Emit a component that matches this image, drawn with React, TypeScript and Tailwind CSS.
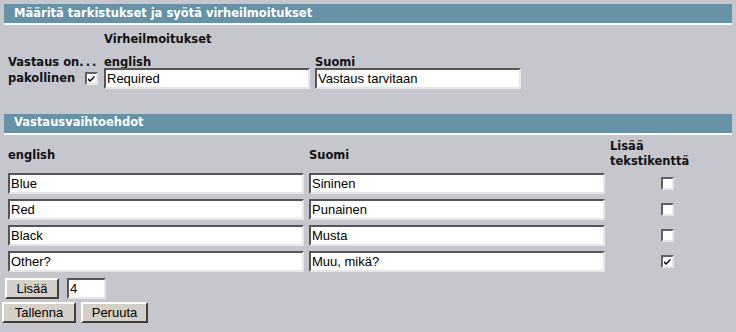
const label = 'font-["DejaVu_Sans",Verdana,sans-serif] text-[11.5px] font-bold text-[#111] leading-none';
const field =
  'h-[21px] bg-white border-2 border-t-[#555] border-l-[#555] border-r-[#e6e6e6] border-b-[#e6e6e6] px-[1px] font-["Liberation_Sans",Arial,sans-serif] text-[13px] text-black outline-none';
const button =
  'h-[21px] bg-[#d4d0c8] border-2 border-t-white border-l-white border-r-[#404040] border-b-[#404040] font-["Liberation_Sans",Arial,sans-serif] text-[13px] text-black leading-none';

const Check = ({ checked }: { checked: boolean }) => (
  <span className="inline-flex w-[13px] h-[13px] bg-white border-2 border-t-[#606060] border-l-[#606060] border-r-[#e6e6e6] border-b-[#e6e6e6] items-center justify-center">
    {checked && (
      <svg width="9" height="9" viewBox="0 0 9 9">
        <path d="M1 4 L3 6 L7.5 1.5 L7.5 3.5 L3 8 L1 6 Z" fill="#000" />
      </svg>
    )}
  </span>
);

const SectionBar = ({ title }: { title: string }) => (
  <div className="mx-[4px] border-b-2 border-white">
    <div className="h-[19px] bg-[#6593a5] flex items-center pl-[10px] font-['DejaVu_Sans',Verdana,sans-serif] text-[11.5px] font-bold text-white">
      {title}
    </div>
  </div>
);

const answers = [
  { en: 'Blue', fi: 'Sininen', text: false },
  { en: 'Red', fi: 'Punainen', text: false },
  { en: 'Black', fi: 'Musta', text: false },
  { en: 'Other?', fi: 'Muu, mikä?', text: true },
];

export default function App() {
  return (
    <div className="w-[736px] h-[332px] bg-[#c6c6ce] pt-[4px] overflow-hidden">
      <SectionBar title="Määritä tarkistukset ja syötä virheilmoitukset" />

      {/* tarkistukset */}
      <div className="grid grid-cols-[96px_211px_206px] pl-[8px] mt-[9px]">
        <div />
        <div className={`${label} h-[12px]`}>Virheilmoitukset</div>
        <div />
        <div className={`${label} mt-[11px]`}>
          Vastaus on<span className="tracking-[2px]">...</span>
        </div>
        <div className={`${label} mt-[11px]`}>english</div>
        <div className={`${label} mt-[11px]`}>Suomi</div>
        <div className="flex items-center h-[21px] mt-[-1px]">
          <span className={`${label} mt-[2px]`}>pakollinen</span>
          <span className="ml-[10px] mt-[1px] flex">
            <Check checked />
          </span>
        </div>
        <input className={`${field} w-[206px] mt-[-1px]`} defaultValue="Required" />
        <input className={`${field} w-[206px] mt-[-1px]`} defaultValue="Vastaus tarvitaan" />
      </div>

      <div className="mt-[25px]">
        <SectionBar title="Vastausvaihtoehdot" />
      </div>

      {/* vastausvaihtoehdot */}
      <div className="grid grid-cols-[301px_301px_auto] pl-[8px] mt-[6px] items-center">
        <div className={label}>english</div>
        <div className={label}>Suomi</div>
        <div className="flex flex-col">
          <div className={`${label} h-[15px] leading-[15px]`}>Lisää</div>
          <div className={`${label} h-[15px] leading-[15px]`}>tekstikenttä</div>
        </div>
      </div>
      <div className="flex flex-col gap-[5px] pl-[8px] mt-[2px]">
        {answers.map((a) => (
          <div key={a.en} className="flex items-center">
            <input className={`${field} w-[296px]`} defaultValue={a.en} />
            <input className={`${field} w-[296px] ml-[5px]`} defaultValue={a.fi} />
            <span className="ml-[56px] flex">
              <Check checked={a.text} />
            </span>
          </div>
        ))}
      </div>

      <div className="flex items-center pl-[5px] mt-[6px]">
        <button className={`${button} w-[54px]`}>Lisää</button>
        <input className={`${field} w-[39px] ml-[8px]`} defaultValue="4" />
      </div>
      <div className="flex items-center pl-[2px] mt-[3px] gap-[5px]">
        <button className={`${button} w-[74px]`}>Tallenna</button>
        <button className={`${button} w-[67px]`}>Peruuta</button>
      </div>
    </div>
  );
}
